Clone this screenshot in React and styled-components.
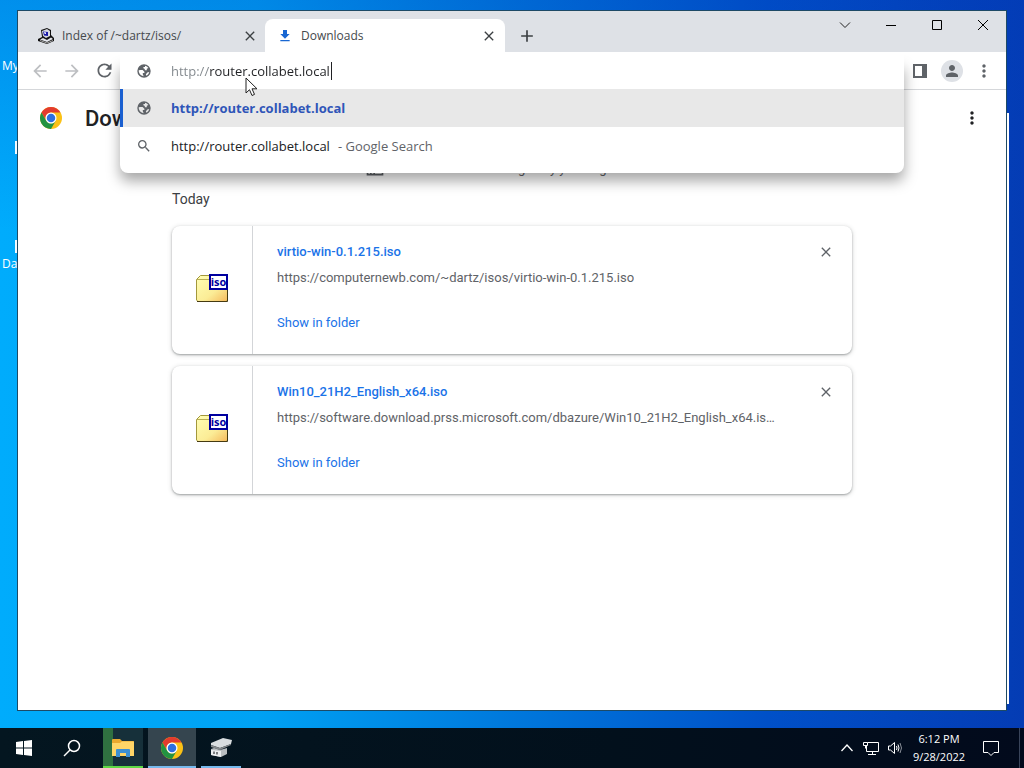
import { useState } from "react";
import styled, { createGlobalStyle } from "styled-components";
import {
  MdAdd,
  MdArrowBack,
  MdArrowForward,
  MdBusiness,
  MdClose,
  MdFileDownload,
  MdMoreVert,
  MdPerson,
  MdRefresh,
  MdSearch,
} from "react-icons/md";

const GlobalStyle = createGlobalStyle`
  * {
    box-sizing: border-box;
  }

  body {
    margin: 0;
    font-family: "Open Sans", "Noto Sans", sans-serif;
  }

  button {
    padding: 0;
    border: none;
    background: none;
    font: inherit;
    color: inherit;
  }
`;

const Screen = styled.div`
  position: relative;
  display: flex;
  flex-direction: column;
  min-height: 100vh;
  overflow: hidden;
  background:
    linear-gradient(to bottom, rgba(0, 60, 190, 0.25), rgba(0, 60, 190, 0) 30%),
    linear-gradient(to right, #00acfc 0%, #00a2f4 25%, #0078dc 50%, #0050c8 75%, #043cb4 100%);
`;

const Desktop = styled.div`
  display: flex;
  flex: 1;
  padding: 10px 17px 17px;
`;

const DesktopLabel = styled.span`
  position: absolute;
  left: 2px;
  top: ${props => props.$top}px;
  font-size: 12px;
  line-height: 16px;
  color: white;
`;

const DesktopIcon = styled.span`
  position: absolute;
  left: 15px;
  top: ${props => props.$top}px;
  width: 24px;
  height: 13px;
  background-color: #f4fbff;
`;

const BackWindow = styled.div`
  position: absolute;
  right: 15px;
  top: 113px;
  bottom: 64px;
  width: 200px;
  background-color: white;
`;

const Window = styled.div`
  position: relative;
  display: flex;
  flex-direction: column;
  flex: 1;
  min-width: 0;
  border: 1px solid #1d4a66;
  background-color: white;
`;

const TitleBar = styled.div`
  display: flex;
  height: 41px;
  padding: 8px 0 0 8px;
  background-color: #dee1e6;
`;

const Tab = styled.div`
  display: flex;
  align-items: center;
  flex: 0 1 240px;
  min-width: 0;
  gap: 8px;
  padding: 0 8px 0 12px;
  border-radius: 8px 8px 0 0;
  background-color: ${props => (props.$active ? "white" : "transparent")};
  color: #45494d;
  font-size: 12px;

  & + & {
    margin-left: -1px;
  }
`;

const TabTitle = styled.span`
  flex: 1;
  overflow: hidden;
  white-space: nowrap;
`;

const SmallButton = styled.button`
  display: flex;
  align-items: center;
  justify-content: center;
  width: 16px;
  height: 16px;
  color: #3c4043;
`;

const NewTabButton = styled(SmallButton)`
  width: 28px;
  height: 34px;
  margin-left: 8px;
`;

const WindowButtons = styled.div`
  display: flex;
  margin: -8px 0 0 auto;
`;

const WindowButton = styled.button`
  display: flex;
  align-items: center;
  justify-content: center;
  width: 46px;
  height: 28px;
`;

const Toolbar = styled.div`
  display: flex;
  align-items: center;
  height: 38px;
  padding: 0 6px;
  border-bottom: 1px solid #d5d7da;
`;

const ToolButton = styled.button`
  display: flex;
  align-items: center;
  justify-content: center;
  width: 32px;
  height: 32px;
  color: ${props => (props.disabled ? "#bdbfc2" : "#5f6368")};
`;

const Avatar = styled.span`
  display: flex;
  align-items: center;
  justify-content: center;
  width: 22px;
  height: 22px;
  border-radius: 50%;
  background-color: #dee1e6;
`;

const Omnibox = styled.div`
  position: relative;
  flex: 1;
  min-width: 0;
  z-index: 2;
`;

const AddressRow = styled.div`
  position: relative;
  z-index: 1;
  display: flex;
  align-items: center;
  height: 36px;
  padding-left: 16px;
  background-color: white;
  color: #5f6368;
`;

const AddressInput = styled.input`
  field-sizing: content;
  margin-left: 19px;
  padding: 0;
  border: none;
  outline: none;
  font: 13px "Open Sans", "Noto Sans", sans-serif;
  color: #202124;
  background: linear-gradient(to right, #80868b 39px, #202124 39px);
  background-clip: text;
  -webkit-text-fill-color: transparent;
`;

const Caret = styled.span`
  width: 1px;
  height: 18px;
  margin-left: 1px;
  background-color: #202124;
`;

const Dropdown = styled.div`
  position: absolute;
  top: 8px;
  left: 0;
  right: 0;
  padding: 28px 0 8px;
  border-radius: 0 0 8px 8px;
  background-color: white;
  box-shadow: 0 8px 14px rgba(0, 0, 0, 0.35);
`;

const Suggestion = styled.button`
  display: flex;
  align-items: center;
  width: 100%;
  height: 38px;
  padding-left: 16px;
  background-color: ${props => (props.$selected ? "#e8e8e8" : "white")};
  box-shadow: ${props => (props.$selected ? "inset 3px 0 0 #1a5fd0" : "none")};
  color: #5f6368;
  font-size: 13px;
  text-align: left;
`;

const SuggestionText = styled.span`
  margin-left: 19px;
  color: ${props => (props.$selected ? "#2f55b8" : "#202124")};
  font-weight: ${props => (props.$selected ? 700 : 400)};
`;

const SuggestionHint = styled.span`
  margin-left: 8px;
`;

const Page = styled.main`
  flex: 1;
  font-family: Roboto, sans-serif;
`;

const PageHeader = styled.header`
  display: flex;
  align-items: center;
  height: 56px;
  padding: 0 18px 0 21px;
`;

const PageTitle = styled.h1`
  flex: 1;
  margin: 0 0 0 22px;
  font-size: 22px;
  font-weight: 500;
  color: #202124;
`;

const Downloads = styled.div`
  width: 100%;
  max-width: 680px;
  margin: 0 auto;
`;

const ManagedNote = styled.div`
  display: flex;
  align-items: center;
  justify-content: center;
  gap: 8px;
  height: 44px;
  font-size: 13px;
  color: #5f6368;
`;

const DateHeading = styled.h2`
  margin: 0 0 17px;
  font-size: 14px;
  font-weight: 400;
  line-height: 19px;
  color: #3c4043;
`;

const Card = styled.article`
  display: flex;
  height: 128px;
  margin-bottom: 12px;
  border-radius: 8px;
  background-color: white;
  box-shadow: 0 1px 2px rgba(60, 64, 67, 0.4), 0 1px 4px 1px rgba(60, 64, 67, 0.15);
`;

const CardIcon = styled.div`
  display: flex;
  align-items: center;
  justify-content: center;
  width: 81px;
  border-right: 1px solid #d3d5d8;
`;

const CardBody = styled.div`
  display: flex;
  flex-direction: column;
  align-items: flex-start;
  flex: 1;
  min-width: 0;
  padding: 16px 0 0 24px;
  font-size: 13px;
  line-height: 20px;
`;

const FileLink = styled.a`
  font-weight: 500;
  color: #1a73e8;
  text-decoration: none;
`;

const FileUrl = styled.a`
  max-width: 100%;
  margin-top: 6px;
  overflow: hidden;
  text-overflow: ellipsis;
  white-space: nowrap;
  color: #5f6368;
  text-decoration: none;
`;

const FolderButton = styled.button`
  margin-top: 25px;
  color: #1a73e8;
`;

const CardClose = styled(SmallButton)`
  margin: 18px 18px 0 40px;
  color: #5f6368;
`;

const Taskbar = styled.footer`
  position: relative;
  display: flex;
  height: 40px;
  background: linear-gradient(to right, #041620, #02101c 60%, #020a1c);
  color: white;
`;

const TaskButton = styled.button`
  display: flex;
  align-items: center;
  justify-content: center;
  width: 48px;
`;

const AppList = styled.div`
  display: flex;
  gap: 5px;
  margin-left: 7px;
`;

const AppButton = styled(TaskButton)`
  width: ${props => (props.$active ? 48 : 40)}px;
  border-bottom: 2px solid ${props => props.$line || "#76b9ed"};
  padding-top: 2px;
  background: ${props => props.$fill || "transparent"};
`;

const Tray = styled.div`
  display: flex;
  align-items: center;
  margin-left: auto;
`;

const TrayButton = styled.button`
  display: flex;
  align-items: center;
  justify-content: center;
  width: 24px;
  height: 40px;
`;

const Clock = styled.time`
  width: 64px;
  font-size: 11px;
  line-height: 18px;
  text-align: center;
`;

const NoticeButton = styled(TrayButton)`
  width: 40px;
`;

const ShowDesktop = styled.button`
  width: 5px;
  height: 40px;
  margin-left: 8px;
  border-left: 1px solid #39445a;
`;

const Pointer = styled.svg`
  position: absolute;
  left: 245px;
  top: 77px;
  z-index: 5;
  pointer-events: none;
`;

function GlobeIcon() {
  return (
    <svg width="16" height="16" viewBox="0 0 16 16" aria-hidden="true">
      <path
        d="M8 1.300A6.700 6.700 0 1 0 8 14.700A6.700 6.700 0 1 0 8 1.300ZM9 2.700A5.400 5.400 0 0 1 12.400 5L10.800 5.800V7.200H8.800V6L7.400 5.300V4H9ZM2.700 7.300L4.300 7H6.600L8.400 8.700V10H6.800V11.300L7.700 13.300A5.400 5.400 0 0 1 2.700 7.300ZM13.300 9.100A5.400 5.400 0 0 1 10.600 12.700L9.800 11.500L11.300 9.600Z"
        fill="currentColor"
        fillRule="evenodd"
      />
    </svg>
  );
}

function ChromeLogo() {
  return (
    <svg width="24" height="24" viewBox="0 0 48 48" aria-hidden="true">
      <circle cx="24" cy="24" r="22" fill="#fbc116" />
      <path d="M4.95 13A22 22 0 0 1 43.05 13L24 13A11 11 0 0 0 14.47 29.5Z" fill="#e33b2e" />
      <path d="M4.95 13A22 22 0 0 0 24 46L33.53 29.5A11 11 0 0 1 14.47 29.5Z" fill="#229342" />
      <circle cx="24" cy="24" r="11" fill="white" />
      <circle cx="24" cy="24" r="8.5" fill="#2f6fe0" />
    </svg>
  );
}

function ComputerIcon() {
  return (
    <svg width="16" height="16" viewBox="0 0 16 16" aria-hidden="true">
      <path d="M3 2L9 0L13 2V7L16 10V13L9 16L0 13V11L4 9Z" fill="#111" />
      <path d="M4 3L9 1L12 3V8L8 10L5 8Z" fill="#d9dbe2" />
      <path d="M5 3.500L10 4V8L6 7.500Z" fill="#1a1aa8" />
      <path d="M6 4L8 4.500V6L6.500 5.700Z" fill="white" />
      <path d="M2 11.500L5 10L9 12L13 9.500L15 11L9 14Z" fill="#e4e6ec" />
      <path d="M2 12.500L9 15L15 12.500" stroke="#aaa" fill="none" />
    </svg>
  );
}

function IsoIcon() {
  return (
    <svg width="32" height="32" viewBox="0 2 32 32" aria-hidden="true">
      <defs>
        <linearGradient id="folder" x1="0" y1="0" x2="1" y2="1">
          <stop offset="0" stopColor="#ffffb4" />
          <stop offset="0.6" stopColor="#fbec96" />
          <stop offset="1" stopColor="#f5b95c" />
        </linearGradient>
      </defs>
      <path d="M0.500 28V7.500L4.500 3.500H13L16 7.500H31.500V28L30 29.500H2Z" fill="url(#folder)" stroke="#a3983c" />
      <path d="M1 7.500H14" stroke="#b8ad55" />
      <path d="M1 29.500H31.500V8" stroke="#453a12" fill="none" />
      <rect x="14" y="3" width="17" height="14" fill="white" stroke="#0000a0" strokeWidth="2" />
      <text x="22.500" y="14" textAnchor="middle" fontFamily="Open Sans, sans-serif" fontSize="11" fontWeight="700" fill="#0000a0">
        iso
      </text>
    </svg>
  );
}

function FolderIcon() {
  return (
    <svg width="24" height="24" viewBox="0 0 24 24" aria-hidden="true">
      <path d="M1 4Q1 3 2 3H9L11 5H22Q23 5 23 6V20H1Z" fill="#eba92f" />
      <path d="M1 7H9L11 5.500H23V20H1Z" fill="#ffd567" />
      <path d="M5 21V14Q5 13 6 13H18Q19 13 19 14V21H15V17H9V21Z" fill="#3d8fd1" />
    </svg>
  );
}

function DriveIcon() {
  return (
    <svg width="24" height="24" viewBox="0 0 24 24" aria-hidden="true">
      <path d="M2 7L14 2L23 4L22 8L11 12L2 9Z" fill="#d9dde0" />
      <path d="M2 9L11 12L22 8V9L11 14L2 11Z" fill="#85898c" />
      <path d="M5 12L11 14L18 12V18L12 21L2 19V13Z" fill="#b9bdc0" />
      <path d="M2 14L12 15V21L2 19Z" fill="#eceeef" />
      <path d="M5 15.500V18M8 16V18.500" stroke="#55595c" strokeWidth="1.500" />
    </svg>
  );
}

const files = [
  {
    name: "virtio-win-0.1.215.iso",
    url: "https://computernewb.com/~dartz/isos/virtio-win-0.1.215.iso",
  },
  {
    name: "Win10_21H2_English_x64.iso",
    url: "https://software.download.prss.microsoft.com/dbazure/Win10_21H2_English_x64.is…",
  },
];

function DownloadCard({ file }) {
  return (
    <Card>
      <CardIcon>
        <IsoIcon />
      </CardIcon>
      <CardBody>
        <FileLink href="#">{file.name}</FileLink>
        <FileUrl href="#">{file.url}</FileUrl>
        <FolderButton>Show in folder</FolderButton>
      </CardBody>
      <CardClose aria-label="Remove from list">
        <MdClose size={18} />
      </CardClose>
    </Card>
  );
}

export default function App() {
  const [address, setAddress] = useState("http://router.collabet.local");

  return (
    <Screen>
      <GlobalStyle />
      <DesktopLabel $top={58}>My</DesktopLabel>
      <DesktopIcon $top={141} />
      <DesktopIcon $top={240} />
      <DesktopLabel $top={256}>Da</DesktopLabel>
      <BackWindow />

      <Desktop>
        <Window>
          <TitleBar>
            <Tab>
              <ComputerIcon />
              <TabTitle>Index of /~dartz/isos/</TabTitle>
              <SmallButton aria-label="Close tab">
                <MdClose size={16} />
              </SmallButton>
            </Tab>
            <Tab $active>
              <MdFileDownload size={16} color="#1967d2" />
              <TabTitle>Downloads</TabTitle>
              <SmallButton aria-label="Close tab">
                <MdClose size={16} />
              </SmallButton>
            </Tab>
            <NewTabButton aria-label="New tab">
              <MdAdd size={20} />
            </NewTabButton>
            <WindowButtons>
              <WindowButton aria-label="Search tabs">
                <svg width="12" height="12" viewBox="0 0 12 12" fill="none" stroke="#222">
                  <path d="M1 3.500L6 8.500L11 3.500" />
                </svg>
              </WindowButton>
              <WindowButton aria-label="Minimize">
                <svg width="10" height="10" viewBox="0 0 10 10" stroke="black">
                  <path d="M0 5.500H10" />
                </svg>
              </WindowButton>
              <WindowButton aria-label="Maximize">
                <svg width="10" height="10" viewBox="0 0 10 10" fill="none" stroke="black">
                  <path d="M0.500 0.500H9.500V9.500H0.500Z" />
                </svg>
              </WindowButton>
              <WindowButton aria-label="Close">
                <svg width="10" height="10" viewBox="0 0 10 10" stroke="black">
                  <path d="M0 0L10 10M10 0L0 10" />
                </svg>
              </WindowButton>
            </WindowButtons>
          </TitleBar>

          <Toolbar>
            <ToolButton aria-label="Back" disabled>
              <MdArrowBack size={20} />
            </ToolButton>
            <ToolButton aria-label="Forward" disabled>
              <MdArrowForward size={20} />
            </ToolButton>
            <ToolButton aria-label="Reload">
              <MdRefresh size={21} />
            </ToolButton>
            <Omnibox>
              <AddressRow>
                <GlobeIcon />
                <AddressInput
                  aria-label="Address and search bar"
                  value={address}
                  onChange={(e) => setAddress(e.target.value)}
                />
                <Caret />
              </AddressRow>
              <Dropdown>
                <Suggestion $selected>
                  <GlobeIcon />
                  <SuggestionText $selected>{address}</SuggestionText>
                </Suggestion>
                <Suggestion>
                  <MdSearch size={16} />
                  <SuggestionText>{address}</SuggestionText>
                  <SuggestionHint>- Google Search</SuggestionHint>
                </Suggestion>
              </Dropdown>
            </Omnibox>
            <ToolButton aria-label="Side panel">
              <svg width="14" height="14" viewBox="0 0 14 14" fill="#5f6368">
                <path d="M0 0H14V14H0ZM2 2V12H9V2Z" fillRule="evenodd" />
              </svg>
            </ToolButton>
            <ToolButton aria-label="Profile">
              <Avatar>
                <MdPerson size={18} />
              </Avatar>
            </ToolButton>
            <ToolButton aria-label="Chrome menu">
              <MdMoreVert size={20} />
            </ToolButton>
          </Toolbar>

          <Page>
            <PageHeader>
              <ChromeLogo />
              <PageTitle>Downloads</PageTitle>
              <ToolButton aria-label="More actions">
                <MdMoreVert size={20} color="#202124" />
              </ToolButton>
            </PageHeader>
            <Downloads>
              <ManagedNote>
                <MdBusiness size={20} />
                <span>Your browser is managed by your organization</span>
              </ManagedNote>
              <DateHeading>Today</DateHeading>
              {files.map((file) => (
                <DownloadCard key={file.name} file={file} />
              ))}
            </Downloads>
          </Page>
        </Window>
      </Desktop>

      <Taskbar>
        <TaskButton aria-label="Start">
          <svg width="16" height="16" viewBox="0 0 16 16" fill="white">
            <path d="M0 2L7 1V7.500H0ZM8 1L16 0V7.500H8ZM0 8.500H7V15L0 14ZM8 8.500H16V16L8 15Z" />
          </svg>
        </TaskButton>
        <TaskButton aria-label="Search">
          <svg width="18" height="18" viewBox="0 0 18 18" fill="none" stroke="white" strokeWidth="1.500">
            <circle cx="11" cy="7" r="5.500" />
            <path d="M7 11L1 17" />
          </svg>
        </TaskButton>
        <AppList>
          <AppButton
            aria-label="File Explorer"
            $line="#5fd845"
            $fill="linear-gradient(to right, #2f7040 10px, #16303a 10px)"
          >
            <FolderIcon />
          </AppButton>
          <AppButton aria-label="Google Chrome" $active $fill="#35454f">
            <ChromeLogo />
          </AppButton>
          <AppButton aria-label="Drive utility">
            <DriveIcon />
          </AppButton>
        </AppList>
        <Tray>
          <TrayButton aria-label="Show hidden icons">
            <svg width="14" height="14" viewBox="0 0 14 14" fill="none" stroke="white" strokeWidth="1.300">
              <path d="M1.500 10L7 4L12.500 10" />
            </svg>
          </TrayButton>
          <TrayButton aria-label="Network">
            <svg width="18" height="16" viewBox="0 0 18 16" fill="none" stroke="white">
              <path d="M5.500 2.500H16.500V11.500H4.500V6M10.500 11.500V14.500M6 14.500H14M1.500 2.500H5.500V5.500H1.500ZM3.500 5.500V8.500" />
            </svg>
          </TrayButton>
          <TrayButton aria-label="Volume">
            <svg width="16" height="16" viewBox="0 0 16 16" fill="none" stroke="white">
              <path d="M1.500 6V10H3.500L7.500 13.500V2.500L3.500 6ZM9.500 6Q10.500 8 9.500 10M11 4.500Q13 8 11 11.500" />
              <path d="M13 3Q16 8 13 13" stroke="#8a8f98" />
            </svg>
          </TrayButton>
          <Clock>
            6:12 PM
            <br />
            9/28/2022
          </Clock>
          <NoticeButton aria-label="Notifications">
            <svg width="18" height="18" viewBox="0 0 18 18" fill="none" stroke="white">
              <path d="M1.500 2.500H16.500V13.500H12L9 16.500L6 13.500H1.500Z" />
            </svg>
          </NoticeButton>
          <ShowDesktop aria-label="Show desktop" />
        </Tray>
      </Taskbar>

      <Pointer width="14" height="20" viewBox="0 0 14 20">
        <path d="M1 1V16L4.500 12.700L7 18.500L9.500 17.400L7 11.800H12Z" fill="white" stroke="#222" />
      </Pointer>
    </Screen>
  );
}
